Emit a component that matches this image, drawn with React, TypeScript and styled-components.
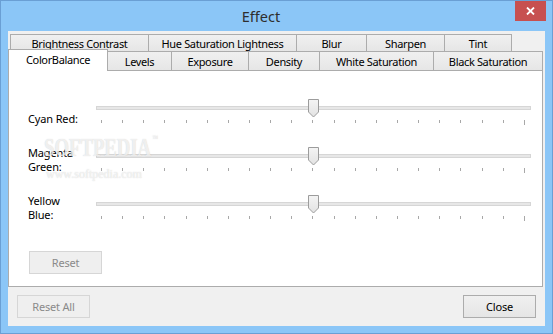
import React from "react";
import styled, { createGlobalStyle } from "styled-components";

const GlobalStyle = createGlobalStyle`
  html, body { margin: 0; padding: 0; background: #8bc6f7; }
  body { font-family: "Noto Sans", "Segoe UI", sans-serif; }
  * { box-sizing: border-box; }
`;

const Window = styled.div`
  width: 553px;
  height: 334px;
  border: 1px solid #6a9fd4;
  background: #8bc6f7;
  display: flex;
  flex-direction: column;
`;

const TitleBar = styled.div`
  height: 30px;
  display: flex;
  align-items: flex-start;
  padding: 0 6px;
`;

const Title = styled.div`
  flex: 1;
  text-align: center;
  font-size: 14.5px;
  line-height: 30px;
  color: #2e2e2e;
`;

const CloseBox = styled.div`
  width: 31px;
  height: 20px;
  background: #c75050;
  display: flex;
  align-items: center;
  justify-content: center;
`;

const Client = styled.div`
  margin: 0 7px 7px 7px;
  flex: 1;
  background: #f0f0f0;
  display: flex;
  flex-direction: column;
`;

const TabControl = styled.div`
  margin-top: 3px;
  display: flex;
  flex-direction: column;
`;

const TabRow = styled.div<{ $indent: number; $h: number }>`
  display: flex;
  align-items: flex-end;
  height: ${(p) => p.$h}px;
  padding-left: ${(p) => p.$indent}px;
`;

const Tab = styled.div<{ $w: number; $h: number; $selected?: boolean }>`
  width: ${(p) => p.$w}px;
  height: ${(p) => p.$h}px;
  border: 1px solid #acacac;
  border-bottom: none;
  background: ${(p) => (p.$selected ? "#ffffff" : "linear-gradient(#f0f0f0, #e6e6e6)")};
  font-size: 11px;
  letter-spacing: -0.35px;
  color: #000;
  display: flex;
  align-items: center;
  justify-content: center;
  padding-top: ${(p) => (p.$selected ? 0 : 1)}px;
  white-space: nowrap;
  & + & { margin-left: -1px; }
  ${(p) =>
    p.$selected
      ? `position: relative; z-index: 1; margin-bottom: -1px; padding-bottom: 2px;`
      : ""}
`;

const Panel = styled.div`
  position: relative;
  width: 535px;
  height: 217px;
  border: 1px solid #acacac;
  background: #ffffff;
  padding: 28px 0 0 19px;
  display: flex;
  flex-direction: column;
`;

const SliderRow = styled.div`
  display: flex;
  align-items: flex-end;
  height: 28px;
  & + & { margin-top: 20px; }
`;

const Label = styled.div`
  width: 68px;
  font-size: 11px;
  letter-spacing: -0.15px;
  line-height: 14px;
  color: #000;
  margin-bottom: 1px;
`;

const Slider = styled.div`
  width: 435px;
  height: 28px;
  display: flex;
  flex-direction: column;
`;

const TrackArea = styled.div`
  position: relative;
  height: 18px;
  padding-top: 7px;
`;

const Track = styled.div`
  height: 4px;
  width: 435px;
  border: 1px solid #d6d6d6;
  background: #e7e7e7;
`;

const ThumbSvg = styled.svg`
  position: absolute;
  top: 0;
  display: block;
`;

const Ticks = styled.div`
  margin-top: 3px;
  padding: 0 6px 0 5px;
  display: flex;
  justify-content: space-between;
  align-items: flex-start;
  height: 6px;
`;

const Tick = styled.div<{ $long?: boolean }>`
  width: 1px;
  height: ${(p) => (p.$long ? 5 : 3)}px;
  background: #a8a8a8;
`;

const Button = styled.div<{ $disabled?: boolean }>`
  width: 73px;
  height: 23px;
  border: 1px solid ${(p) => (p.$disabled ? "#d6d6d6" : "#acacac")};
  background: ${(p) => (p.$disabled ? "#efefef" : "linear-gradient(#f0f0f0, #e5e5e5)")};
  color: ${(p) => (p.$disabled ? "#8a8a8a" : "#000")};
  font-size: 11px;
  letter-spacing: -0.2px;
  display: flex;
  align-items: center;
  justify-content: center;
`;

const ResetButton = styled(Button)`
  margin-top: 28px;
  margin-left: 1px;
`;

const ButtonBar = styled.div`
  flex: 1;
  display: flex;
  justify-content: space-between;
  align-items: flex-start;
  padding: 8px 9px;
`;

const Watermark = styled.div`
  position: absolute;
  left: 35px;
  top: 64px;
  pointer-events: none;
  color: rgba(255, 255, 255, 0.7);
  text-shadow: 0 0 1px rgba(140, 140, 140, 0.45);
  line-height: 1;
`;

const WmBig = styled.div`
  font-family: "Liberation Serif", serif;
  font-size: 26px;
  font-weight: bold;
  transform: scaleX(0.72);
  transform-origin: left top;
  white-space: nowrap;
`;

const WmTm = styled.sup`
  font-size: 8px;
  vertical-align: top;
  margin-left: 2px;
`;

const WmSmall = styled.div`
  font-family: "Liberation Serif", serif;
  font-size: 12px;
  margin-top: 7px;
  margin-left: 2px;
  white-space: nowrap;
`;

const row1 = [
  { t: "Brightness Contrast", w: 139 },
  { t: "Hue Saturation Lightness", w: 149 },
  { t: "Blur", w: 71 },
  { t: "Sharpen", w: 79 },
  { t: "Tint", w: 68 },
];

const row2 = [
  { t: "ColorBalance", w: 100, sel: true },
  { t: "Levels", w: 65 },
  { t: "Exposure", w: 78 },
  { t: "Density", w: 72 },
  { t: "White Saturation", w: 115 },
  { t: "Black Saturation", w: 110 },
];

const sliders: { label: string[]; value: number }[] = [
  { label: ["Cyan Red:"], value: 0.5 },
  { label: ["Magenta", "Green:"], value: 0.5 },
  { label: ["Yellow", "Blue:"], value: 0.5 },
];

function Thumb({ value }: { value: number }) {
  const center = Math.round(5 + 423 * value);
  return (
    <ThumbSvg width="11" height="19" viewBox="0 0 11 19" style={{ left: center - 5 }}>
      <defs>
        <linearGradient id="tg" x1="0" y1="0" x2="0" y2="1">
          <stop offset="0" stopColor="#f4f4f4" />
          <stop offset="1" stopColor="#e2e2e2" />
        </linearGradient>
      </defs>
      <path d="M0.5 0.5 H10.5 V13 L5.5 18 L0.5 13 Z" fill="url(#tg)" stroke="#9c9c9c" strokeWidth="1" />
    </ThumbSvg>
  );
}

function TrackBar({ value }: { value: number }) {
  return (
    <Slider>
      <TrackArea>
        <Track />
        <Thumb value={value} />
      </TrackArea>
      <Ticks>
        {Array.from({ length: 21 }).map((_, i) => (
          <Tick key={i} $long={i === 20} />
        ))}
      </Ticks>
    </Slider>
  );
}

export default function App() {
  return (
    <>
      <GlobalStyle />
      <Window>
        <TitleBar>
          <Title>Effect</Title>
          <CloseBox>
            <svg width="9" height="8" viewBox="0 0 9 8">
              <path d="M1 0.5 L8 7.5 M8 0.5 L1 7.5" stroke="#fff" strokeWidth="1.8" />
            </svg>
          </CloseBox>
        </TitleBar>
        <Client>
          <TabControl>
            <TabRow $indent={2} $h={17}>
              {row1.map((t) => (
                <Tab key={t.t} $w={t.w} $h={17}>
                  {t.t}
                </Tab>
              ))}
            </TabRow>
            <TabRow $indent={0} $h={19}>
              {row2.map((t) => (
                <Tab key={t.t} $w={t.w} $h={t.sel ? 22 : 19} $selected={t.sel}>
                  {t.t}
                </Tab>
              ))}
            </TabRow>
            <Panel>
              {sliders.map((s, i) => (
                <SliderRow key={i}>
                  <Label>
                    {s.label.map((l) => (
                      <div key={l}>{l}</div>
                    ))}
                  </Label>
                  <TrackBar value={s.value} />
                </SliderRow>
              ))}
              <ResetButton $disabled>Reset</ResetButton>
              <Watermark>
                <WmBig>
                  SOFTPEDIA<WmTm>™</WmTm>
                </WmBig>
                <WmSmall>www.softpedia.com</WmSmall>
              </Watermark>
            </Panel>
          </TabControl>
          <ButtonBar>
            <Button $disabled>Reset All</Button>
            <Button>Close</Button>
          </ButtonBar>
        </Client>
      </Window>
    </>
  );
}
